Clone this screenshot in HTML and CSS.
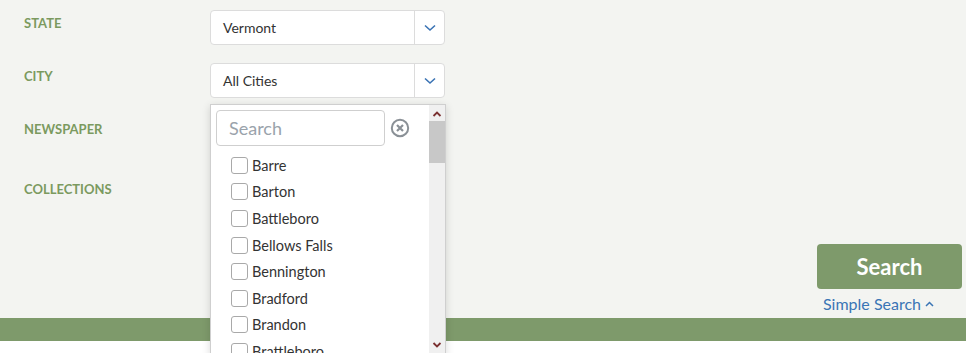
FILE: index.html
```html
<!DOCTYPE html>
<html>
<head>
<meta charset="utf-8">
<link rel="stylesheet" href="styles.css">
</head>
<body>
<div class="page">
  <div class="panel">
    <div class="fields">
      <div class="row">
        <div class="label">State</div>
        <div class="select">
          <span class="value">Vermont</span>
          <span class="arrow"><svg width="12" height="8" viewBox="0 0 12 8"><path d="M1 1.5 L6 6 L11 1.5" fill="none" stroke="#3a73b4" stroke-width="1.6"/></svg></span>
        </div>
      </div>
      <div class="row">
        <div class="label">City</div>
        <div class="select city">
          <span class="value">All Cities</span>
          <span class="arrow"><svg width="12" height="8" viewBox="0 0 12 8"><path d="M1 1.5 L6 6 L11 1.5" fill="none" stroke="#3a73b4" stroke-width="1.6"/></svg></span>
          <div class="dropdown">
            <div class="list-area">
              <div class="search-row">
                <input class="search-input" type="text" placeholder="Search">
                <svg class="clear" width="20" height="20" viewBox="0 0 20 20"><circle cx="10" cy="10" r="8.2" fill="none" stroke="#8a9096" stroke-width="2"/><path d="M7 7 L13 13 M13 7 L7 13" stroke="#8a9096" stroke-width="2.2"/></svg>
              </div>
              <ul class="options">
                <li><span class="box"></span>Barre</li>
                <li><span class="box"></span>Barton</li>
                <li><span class="box"></span>Battleboro</li>
                <li><span class="box"></span>Bellows Falls</li>
                <li><span class="box"></span>Bennington</li>
                <li><span class="box"></span>Bradford</li>
                <li><span class="box"></span>Brandon</li>
                <li><span class="box"></span>Brattleboro</li>
              </ul>
            </div>
            <div class="scrollbar">
              <svg class="sb-up" width="10" height="8" viewBox="0 0 10 8"><path d="M1.5 6 L5 2.5 L8.5 6" fill="none" stroke="#7a3030" stroke-width="1.8"/></svg>
              <div class="thumb"></div>
              <svg class="sb-down" width="10" height="8" viewBox="0 0 10 8"><path d="M1.5 2 L5 5.5 L8.5 2" fill="none" stroke="#7a3030" stroke-width="1.8"/></svg>
            </div>
          </div>
        </div>
      </div>
      <div class="row">
        <div class="label">Newspaper</div>
        <div class="select"></div>
      </div>
      <div class="row">
        <div class="label">Collections</div>
        <div class="select"></div>
      </div>
    </div>
    <div class="actions">
      <button class="search-btn">Search</button>
      <a class="simple-link" href="#">Simple Search <svg width="9" height="6" viewBox="0 0 9 6"><path d="M1 5 L4.5 1.5 L8 5" fill="none" stroke="#3a75b5" stroke-width="1.5"/></svg></a>
    </div>
  </div>
  <div class="bar"></div>
  <div class="below"></div>
</div>
</body>
</html>
```

FILE: styles.css
```css
* { box-sizing: border-box; }
html, body { margin: 0; padding: 0; }
body {
  font-family: Lato, "Open Sans", Arial, sans-serif;
  background: #fff;
  overflow: hidden;
}
.page { width: 966px; height: 353px; }
.panel {
  height: 318px;
  background: #f3f4f1;
  display: flex;
  justify-content: space-between;
}
.fields {
  padding: 10px 0 0 24px;
  display: flex;
  flex-direction: column;
}
.row {
  display: flex;
  align-items: flex-start;
  height: 35px;
  margin-bottom: 18px;
}
.row:nth-child(3) { margin-bottom: 25px; }
.label {
  width: 186px;
  padding-top: 5px;
  font-size: 13px;
  font-weight: 700;
  text-transform: uppercase;
  color: #7b9a5f;
}
.select {
  position: relative;
  width: 235px;
  height: 35px;
  background: #fff;
  border: 1px solid #dcdcdc;
  border-radius: 4px;
  display: flex;
  align-items: center;
}
.value {
  flex: 1;
  padding-left: 12px;
  font-size: 14px;
  color: #333;
}
.arrow {
  width: 30px;
  height: 33px;
  border-left: 1px solid #dcdcdc;
  display: flex;
  align-items: center;
  justify-content: center;
}
.dropdown {
  position: absolute;
  left: -1px;
  top: 40px;
  width: 236px;
  height: 252px;
  background: #fff;
  border: 1px solid #cfcfcf;
  box-shadow: 0 2px 8px rgba(0,0,0,0.15);
  display: flex;
  z-index: 5;
  overflow: hidden;
}
.list-area { flex: 1; padding: 5px 0 0 5px; }
.search-row { display: flex; align-items: center; }
.search-input {
  width: 169px;
  height: 36px;
  border: 1px solid #cfcfcf;
  border-radius: 4px;
  padding: 0 12px;
  font-family: Lato, "Open Sans", Arial, sans-serif;
  font-size: 18px;
  color: #333;
  outline: none;
}
.search-input::placeholder { color: #9aa3ab; }
.clear { margin-left: 5px; }
.options {
  list-style: none;
  margin: 6px 0 0 0;
  padding: 0 0 0 15px;
}
.options li {
  height: 26.6px;
  display: flex;
  align-items: center;
  font-size: 14.5px;
  color: #333;
}
.box {
  width: 17px;
  height: 17px;
  border: 1px solid #a9a9a9;
  border-radius: 3px;
  margin-right: 4px;
  background: #fff;
}
.scrollbar {
  width: 16px;
  background: #f0f0f0;
  position: relative;
  display: flex;
  flex-direction: column;
  align-items: center;
}
.sb-up { margin-top: 5px; }
.thumb {
  width: 16px;
  height: 42px;
  margin-top: 3px;
  background: #c8c8c8;
}
.sb-down { position: absolute; bottom: 6px; left: 3px; }
.actions {
  align-self: flex-end;
  display: flex;
  flex-direction: column;
  align-items: flex-start;
  padding: 0 4px 5px 0;
}
.search-btn {
  width: 145px;
  height: 45px;
  background: #7e9a6b;
  border: none;
  border-radius: 4px;
  color: #fff;
  font-family: Lato, "Open Sans", Arial, sans-serif;
  font-weight: 700;
  font-size: 22px;
}
.simple-link {
  margin: 5px 0 0 6px;
  color: #3a75b5;
  font-size: 16px;
  text-decoration: none;
  display: flex;
  align-items: center;
  gap: 4px;
}
.bar { height: 23px; background: #7e9a6b; }
.below { height: 12px; background: #fff; }
```
